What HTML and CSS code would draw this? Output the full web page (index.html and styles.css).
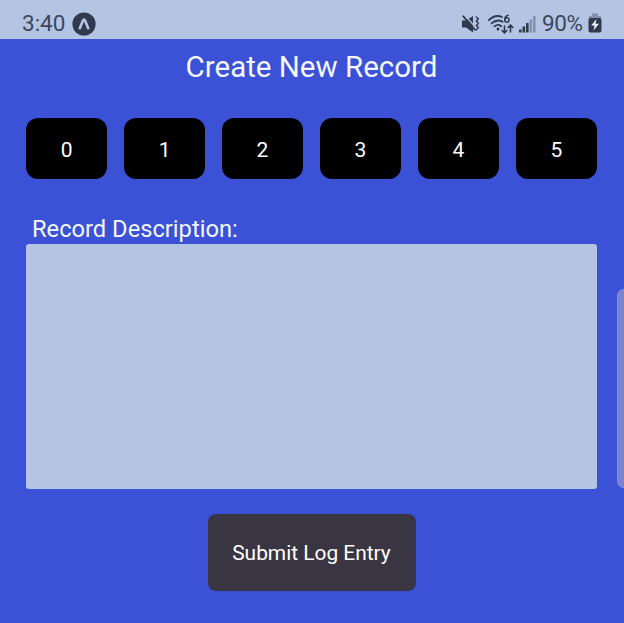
FILE: index.html
```html
<!DOCTYPE html>
<html lang="en">
<head>
<meta charset="utf-8">
<title>Create New Record</title>
<link rel="stylesheet" href="styles.css">
</head>
<body>
<header class="status">
  <span class="clock">3:40</span>
  <svg class="app-icon" width="24" height="24" viewBox="0 0 24 24"><circle cx="12" cy="12" r="11.6" fill="#303a4e"/><path d="M7.8 16.2 11 8.6Q12 6.6 13 8.6L16.2 16.2" fill="none" stroke="#b4c5e4" stroke-width="2.6" stroke-linecap="round" stroke-linejoin="round"/></svg>
  <svg class="indicators" width="76" height="24" viewBox="0 0 76 24">
    <path d="M1 8.5H5L12 4V20.5L5 15.5H1Z" fill="#303a4e"/>
    <path d="M3.5 3 15 15.8" stroke="#b4c5e4" stroke-width="1.3"/>
    <g fill="none" stroke="#303a4e" stroke-width="1.8" stroke-linecap="round">
      <path d="M2.3 4.3 14 17.8"/>
      <path d="M15.3 5 17.4 6.8 15.3 9 17.4 11.2 15.3 13.4 17.4 15.6 15.5 17.6" stroke-width="1.5" stroke-linejoin="round"/>
      <path d="M27.8 8.2Q34.5 2 41 5M30.5 11.4Q36 6.6 41.6 9.8M33.4 14.4Q37 11.6 40.2 14.2" stroke-width="1.8"/>
      <path d="M43.5 14V20.5M41.3 18.6 43.5 20.8 45.7 18.6M49.5 20V13.5M47.3 15.4 49.5 13.2 51.7 15.4" stroke-width="1.6"/>
      <path d="M47.2 3.3Q43.8 4 43.8 7.8" stroke-width="1.5"/>
      <circle cx="45.9" cy="8" r="2.2" stroke-width="1.5"/>
    </g>
    <circle cx="37" cy="17" r="1.5" fill="#303a4e"/>
    <g class="bars"><rect x="58" y="17.5" width="2.6" height="3"/><rect x="61.5" y="14.5" width="2.6" height="6"/><rect x="65" y="11" width="2.6" height="9.5"/><rect class="dim" x="68.5" y="7.5" width="2.6" height="13"/><rect class="dim" x="72" y="4" width="2.6" height="16.5"/></g>
  </svg>
  <span class="percent">90%</span>
  <svg class="battery" width="14" height="20" viewBox="0 0 14 20"><path d="M4 0.5H10V3H13V7H1V3H4Z" fill="#8290aa"/><rect x="0.5" y="5" width="13" height="14.5" rx="2" fill="#303a4e"/><path d="M8.5 6 3.2 12.6H6.5L5.5 17.5 11 10.8H7.6Z" fill="#e8f1ff"/></svg>
</header>
<main class="screen">
  <h1 class="title">Create New Record</h1>
  <div class="ratings">
    <button>0</button><button>1</button><button>2</button><button>3</button><button>4</button><button>5</button>
  </div>
  <label class="label" for="description">Record Description:</label>
  <textarea class="description" id="description"></textarea>
  <button class="submit">Submit Log Entry</button>
  <div class="edge-handle"></div>
</main>
</body>
</html>
```
FILE: styles.css
```css
* { box-sizing: border-box; }
body { margin: 0; height: 623px; overflow: hidden; background: #3b51d6; font-family: Roboto, sans-serif; color: #f3f7ff; }
button { border: 0; padding: 0; font-family: inherit; color: #fff; }
.status { display: flex; align-items: center; height: 39px; padding: 8px 22px 0 22px; background: #b4c5e4; color: #3c465c; font-size: 22.5px; line-height: 30px; }
.clock, .percent { height: 32px; font-weight: 400; }
.clock { width: 50px; }
.indicators { margin-left: auto; }
.percent { margin-left: 5px; width: 43px; letter-spacing: -0.4px; }
.battery { margin-left: 3px; margin-bottom: 1px; }
.bars { fill: #303a4e; }
.bars .dim { fill: #8492b1; }
.screen { display: flex; flex-direction: column; height: 584px; padding: 0 27px 0 26px; }
.title { margin: 10px 0 0; height: 36px; text-align: center; font-size: 29.5px; line-height: 36px; font-weight: 400; }
.ratings { display: grid; grid-template-columns: repeat(6, 1fr); gap: 16.6px; height: 61px; margin-top: 33px; }
.ratings button { padding-top: 3px; background: #000; border-radius: 12px; font-size: 21px; line-height: 58px; }
.label { margin: 36px 0 0 6px; height: 29px; font-size: 23.7px; line-height: 29px; }
.description { display: block; width: 100%; height: 245px; border: 0; border-radius: 3px; background: #b4c5e4; resize: none; outline: 0; }
.submit { align-self: center; width: 208px; height: 77px; margin-top: 25px; padding-top: 1px; border-radius: 8px; background: #3a3542; font-size: 20.9px; }
.edge-handle { position: absolute; right: 0; top: 289px; width: 7px; height: 199px; border-radius: 7px 0 0 7px; background: #7c82cf; border: 1px solid #8990d2; border-right: 0; }
```
